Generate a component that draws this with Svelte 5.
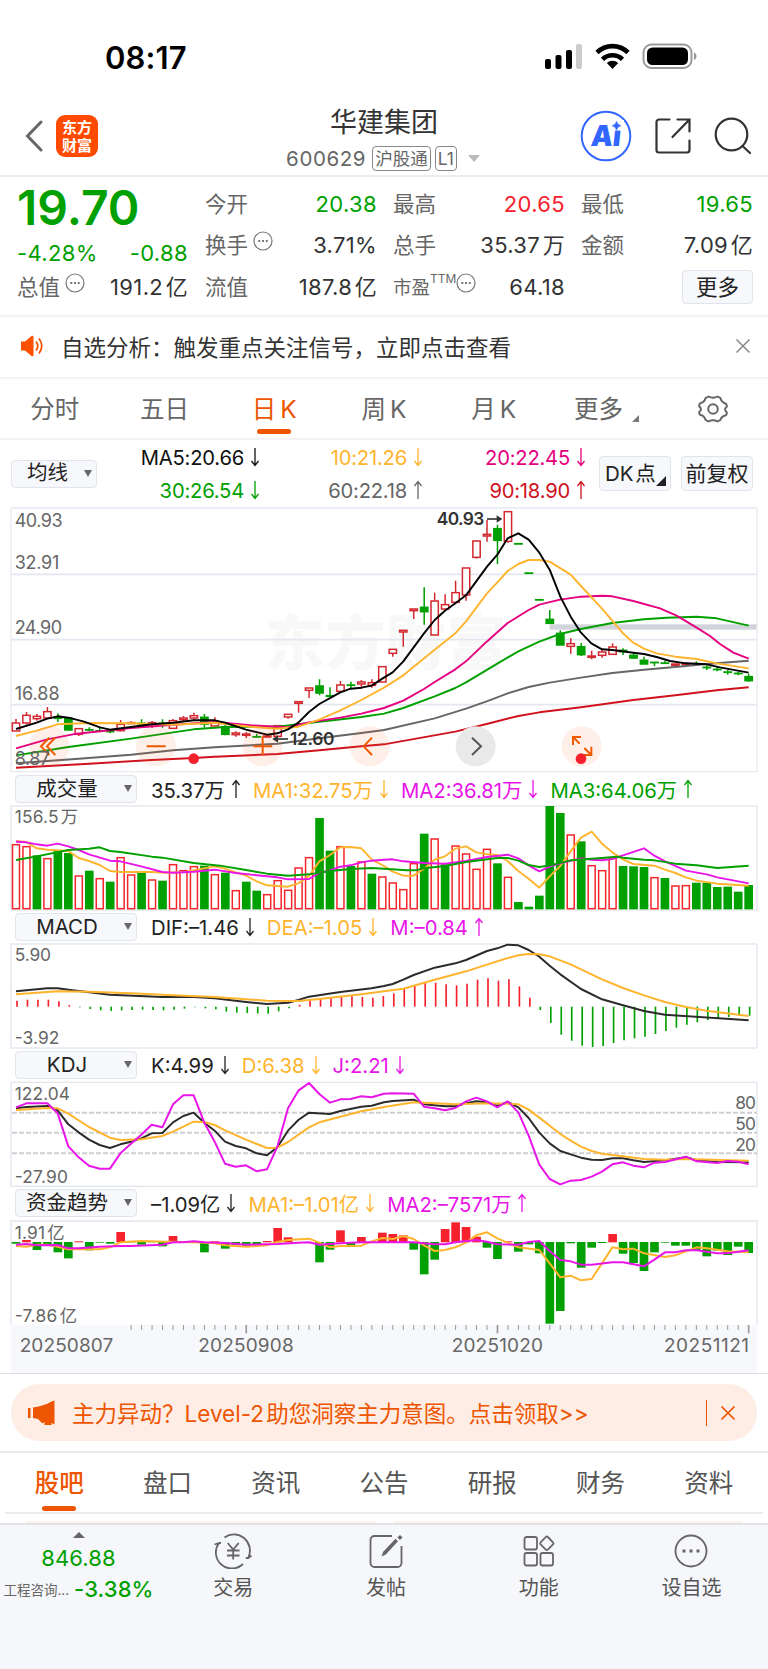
<script>
    // All chart coordinates are in thirds of a pixel
    const barX = (i) => 48 + 31.4 * i;

    // kind, high, top, bottom, low
    const candles = `r657,668,694,694 r636,645,670,674 r642,648,657,662 r621,634,655,655 g640,652,656,666 g653,653,691,691 r685,685,704,708 g682,688,691,694 g684,691,693,694 g692,693,696,700
        r660,672,693,694 r664,667,672,672 g658,669,673,680 r663,667,673,684 g658,669,672,683 r657,661,686,686 r648,653,660,664 r638,646,655,660 g642,651,673,683 r652,667,679,679
        g675,679,704,706 r694,698,705,710 r696,701,707,714 g702,709,711,712 r704,707,712,714 r676,676,710,710 r642,642,652,656 r604,604,611,638 r563,563,572,594 g538,557,580,586
        g562,586,590,590 r543,554,575,578 g545,554,557,565 r540,545,553,566 r538,547,557,563 r499,499,547,547 r447,447,461,470 r390,390,397,440 r326,326,333,357 g262,321,336,374
        r278,302,406,406 r283,313,328,330 r242,277,308,310 r203,203,286,302 r122,122,173,176 r60,102,109,125 g74,85,122,192 r34,34,125,128 g130,130,133,133 g218,218,221,221
        g298,298,301,301 g330,357,371,371 g391,399,436,436 r415,430,440,461 g429,439,465,468 r452,467,473,478 r450,455,467,473 r430,440,464,465 g445,450,456,465 g460,465,475,477
        g470,480,493,493 g486,486,489,498 g482,488,491,491 r491,491,497,497 r487,490,495,495 g484,490,493,493 g496,501,504,510 g502,507,510,514 g510,515,518,524 g515,519,522,526 g521,529,543,545`
        .split(/\s+/)
        .map((c) => ({ up: c[0] === 'r', p: c.slice(1).split(',').map(Number) }));

    const parseBars = (s) => s.split(/\s+/).map((b) => ({ up: b[0] === 'r', y: Number(b.slice(1)) }));

    const volume = parseBars(
        'r223 r229 g257 r265 g243 g250 r317 g303 r325 g336 r262 r314 g309 r329 g333 r283 r301 r289 g288 r313 g309 r361 g336 g363 r373 r331 r360 r293 r262 g145 g243 r229 g289 r275 g312 r320 r338 r358 r280 g192 r206 g284 r227 r251 r297 r237 g281 r321 g397 g411 g378 g109 g130 r194 g215 r286 r301 r263 g289 g290 g292 r322 g325 r347 r346 g339 g339 g352 g351 g366 g346'
    );
    const macd = parseBars(
        'r693 r690 r690 r690 r695 r706 g713 g718 g722 g724 g722 g721 g720 g721 g722 g720 g717 g713 g716 g719 g726 g729 g730 g731 g732 g725 g716 r705 r693 r685 r686 r681 r680 r682 r684 r679 r671 r657 r647 r640 r639 r644 r647 r642 r630 r626 r633 r629 r650 r684 g721 g760 g795 g813 g828 g832 g829 g820 g812 g806 g801 g793 g784 g774 g765 g758 g751 g746 g742 g738 g738'
    );
    const funds = parseBars(
        'g582 r570 g601 g584 g608 g626 r574 g602 g579 g582 r546 g577 g585 g577 g590 r558 r577 r574 g608 r574 g597 g586 g588 g587 r573 r534 r562 r577 r577 g638 g600 r541 g592 r561 r577 r548 r552 r556 g600 g674 g630 r537 r517 r531 r560 g594 g628 r574 g606 g584 g611 g822 g784 g581 g654 g594 g580 r552 g612 g640 g664 g608 g579 g588 g588 g602 g620 g603 g616 g591 g610'
    );

    const priceLines = [
        ['#d0121e', '48,803 268,791 455,780 581,774 644,770 832,762 958,751 1084,739 1152,733 1366,695 1460,672 1555,648 1618,637 1743,622 1900,600 2026,586 2150,571 2246,562'],
        ['#666', '48,790 236,776 393,764 519,751 644,742 832,731 958,715 1084,699 1152,690 1304,655 1398,626 1460,604 1523,580 1586,561 1649,548 1743,533 1837,519 1932,509 2050,499 2120,492 2246,482'],
        ['#00a000', '48,766 205,741 393,716 581,688 675,681 832,680 958,665 1084,651 1152,641 1210,624 1304,589 1366,564 1398,547 1492,491 1555,454 1618,425 1680,402 1743,387 1837,369 1932,358 2000,353 2090,350 2150,355 2246,377'],
        ['#e5007f', '48,745 142,718 230,701 393,684 519,674 644,666 750,676 860,682 927,667 1021,653 1084,641 1152,624 1210,602 1272,567 1304,546 1366,508 1398,484 1460,425 1523,369 1586,330 1618,314 1680,299 1743,290 1806,287 1837,289 1900,303 1980,325 2030,347 2090,383 2130,408 2160,432 2200,458 2246,476'],
        ['#ffb42e', '48,708 110,692 173,673 267,669 393,670 519,674 644,668 750,680 830,686 895,680 958,659 1021,631 1084,600 1152,563 1210,526 1304,449 1366,400 1398,364 1461,280 1492,247 1523,213 1555,192 1586,180 1618,180 1649,185 1712,224 1743,258 1806,326 1869,400 1900,428 1932,446 1970,460 2026,470 2090,477 2150,490 2246,505'],
        ['#000', '48,687 110,668 142,656 173,649 205,653 252,665 300,682 330,689 393,681 455,673 519,668 581,661 644,661 675,668 738,689 801,704 832,700 864,688 895,668 927,636 958,612 1021,577 1052,566 1084,563 1115,557 1147,536 1178,517 1210,484 1272,400 1304,360 1335,332 1366,310 1398,286 1461,200 1492,164 1523,115 1555,100 1586,119 1618,158 1649,209 1681,290 1712,350 1743,398 1774,430 1806,448 1837,450 1900,458 1932,462 1970,471 2010,483 2058,490 2120,493 2160,502 2246,518']
    ];
    const volumeLines = [
        ['#ffb42e', '48,214 79,217 110,236 142,240 205,244 236,265 267,274 299,286 330,304 361,307 455,307 500,309 560,306 644,290 675,297 707,308 738,318 770,335 801,347 864,351 895,341 927,319 958,275 990,256 1021,233 1052,232 1084,236 1115,269 1152,289 1178,306 1210,318 1241,318 1272,297 1304,270 1335,260 1366,237 1398,230 1429,248 1461,254 1492,256 1523,274 1555,304 1586,327 1618,354 1649,320 1680,290 1712,245 1743,204 1775,186 1806,222 1837,248 1869,269 1900,283 1963,288 1995,300 2026,310 2058,323 2090,333 2152,342 2246,348'],
        ['#e815e8', '48,216 79,218 110,224 142,228 173,222 205,230 236,241 267,254 330,273 361,275 424,290 487,307 519,309 581,306 644,300 707,310 832,323 864,329 927,328 958,310 990,302 1021,291 1052,287 1084,278 1115,273 1152,270 1178,269 1210,275 1272,280 1335,282 1398,274 1461,262 1523,255 1555,266 1586,287 1618,305 1649,291 1680,281 1743,266 1775,270 1806,272 1837,268 1869,257 1932,236 1963,258 1995,275 2058,303 2120,314 2152,323 2246,341'],
        ['#00a000', '48,271 110,260 205,241 267,237 299,233 330,244 361,247 455,261 487,264 581,280 660,288 738,301 801,312 864,318 927,314 990,304 1052,298 1115,295 1152,297 1220,302 1245,302 1272,296 1335,289 1398,277 1492,265 1523,265 1555,273 1586,286 1618,292 1649,287 1712,272 1806,265 1849,261 1869,264 1932,270 1963,272 2026,282 2090,287 2152,295 2246,288']
    ];
    const macdLines = [
        ['#2b2b2b', '48,665 142,656 173,656 205,660 330,675 487,682 581,682 644,686 738,697 801,703 864,699 895,691 927,681 1021,667 1115,656 1152,649 1178,643 1210,630 1241,616 1304,594 1366,581 1398,571 1461,544 1492,536 1523,525 1555,527 1586,541 1618,561 1649,588 1681,614 1743,658 1806,689 1869,707 1932,724 1995,735 2246,752'],
        ['#ffb42e', '48,674 173,665 267,666 393,671 519,677 644,682 801,693 895,694 958,688 1084,674 1152,665 1210,657 1304,630 1398,605 1461,585 1523,565 1555,557 1586,553 1618,554 1649,560 1712,584 1806,629 1869,655 1932,677 1995,697 2058,712 2120,723 2246,739']
    ];
    const kdjLines = [
        ['#2b2b2b', '48,175 79,171 142,168 173,181 205,223 236,247 267,269 299,285 330,294 361,283 393,275 424,265 455,250 487,249 519,217 550,198 581,188 613,218 644,242 675,275 707,288 738,295 770,310 801,316 832,292 864,242 895,210 927,188 990,192 1021,183 1084,170 1115,167 1152,157 1178,153 1241,149 1272,163 1335,169 1366,169 1398,160 1429,154 1461,157 1492,167 1523,156 1555,172 1586,204 1618,248 1649,280 1681,303 1712,313 1743,323 1775,329 1806,330 1837,325 1869,325 1900,331 1932,336 1995,331 2058,322 2090,331 2152,336 2246,337'],
        ['#ffb42e', '48,180 142,174 173,175 205,191 267,231 330,263 361,270 424,268 487,258 519,245 581,215 613,216 644,225 675,241 738,269 801,294 832,293 864,276 927,232 958,217 1021,200 1084,184 1152,171 1241,157 1366,163 1461,160 1523,161 1555,163 1586,179 1618,203 1681,252 1712,272 1743,290 1775,303 1806,311 1869,319 1932,327 1995,329 2058,327 2246,332'],
        ['#e815e8', '48,172 79,160 142,160 173,190 205,289 236,322 267,347 299,356 330,356 361,310 393,281 424,254 455,224 487,232 519,163 550,136 581,136 613,218 644,275 675,341 707,350 738,346 770,364 801,358 832,290 864,175 895,122 927,99 958,132 990,158 1021,148 1052,147 1084,139 1115,142 1152,131 1178,130 1241,131 1272,170 1304,175 1335,181 1366,174 1398,154 1429,143 1461,154 1492,172 1523,154 1555,187 1586,257 1618,344 1649,387 1681,403 1712,392 1743,390 1775,380 1806,365 1837,343 1869,337 1900,347 1932,352 1963,338 1995,336 2058,320 2090,334 2152,339 2183,333 2215,335 2246,343']
    ];
    const fundLines = [
        ['#ffb42e', '48,588 79,590 110,584 142,584 173,590 205,598 299,598 330,592 361,577 424,573 500,575 550,576 613,578 644,580 675,586 738,590 801,586 832,576 864,570 927,566 958,578 990,592 1021,588 1084,587 1115,574 1147,564 1178,567 1210,558 1241,567 1272,586 1304,603 1335,600 1366,592 1398,578 1429,556 1461,547 1492,565 1555,592 1618,600 1649,640 1681,682 1712,677 1743,691 1775,687 1806,640 1837,592 1869,598 1900,596 1932,610 1995,621 2026,616 2058,604 2090,592 2120,595 2183,604 2246,607'],
        ['#e815e8', '48,584 79,582 110,586 173,585 205,595 236,595 299,590 361,588 393,588 487,584 519,577 550,577 581,574 613,577 675,579 738,584 832,582 895,578 927,577 958,584 1021,580 1084,577 1152,577 1241,577 1304,583 1335,583 1366,577 1429,570 1461,575 1492,583 1555,584 1586,576 1618,573 1649,603 1681,630 1712,634 1743,644 1775,644 1837,637 1869,637 1932,649 1963,629 1995,607 2026,607 2058,601 2090,601 2152,610 2183,610 2246,601']
    ];

    const ticks = Array.from({ length: 60 }, (_, k) => k + 11);
    const periods = ['分时', '五日', '日 K', '周 K', '月 K', '更多'];
    const averages = [
        ['MA5:20.66', 'down', '#111'], ['10:21.26', 'down', '#ffb42e'], ['20:22.45', 'down', '#e5007f'],
        ['30:26.54', 'down', '#00a000'], ['60:22.18', 'up', '#666'], ['90:18.90', 'up', '#d0121e']
    ];
    const volumeInfo = [['35.37万', 'up', '#222'], ['MA1:32.75万', 'down', '#ffb42e'], ['MA2:36.81万', 'down', '#e815e8'], ['MA3:64.06万', 'up', '#00a000']];
    const macdInfo = [['DIF:–1.46', 'down', '#222'], ['DEA:–1.05', 'down', '#ffb42e'], ['M:–0.84', 'up', '#e815e8']];
    const kdjInfo = [['K:4.99', 'down', '#222'], ['D:6.38', 'down', '#ffb42e'], ['J:2.21', 'down', '#e815e8']];
    const fundInfo = [['–1.09亿', 'down', '#222'], ['MA1:–1.01亿', 'down', '#ffb42e'], ['MA2:–7571万', 'up', '#e815e8']];
    const sections = ['股吧', '盘口', '资讯', '公告', '研报', '财务', '资料'];
</script>

{#snippet arrow(dir)}
    <svg class="arrow" width="10" height="20" viewBox="0 0 10 20" fill="none" stroke="currentColor" stroke-width="1.3">
        {#if dir === 'up'}
            <path d="M5 19V1.5M1.500 6L5 1.500 8.500 6" />
        {:else}
            <path d="M5 1v17.500M1.500 14L5 18.500 8.500 14" />
        {/if}
    </svg>
{/snippet}

{#snippet dots()}
    <svg class="dots" width="20" height="20" viewBox="0 0 20 20" fill="none" stroke="#777">
        <circle cx="10" cy="10" r="9" stroke-width="1.2" />
        <path d="M5.3 10h2M9 10h2M12.7 10h2" stroke-width="1.8" />
    </svg>
{/snippet}

{#snippet indicator(name, info)}
    <div class="indicator">
        <div class="picker wide"><span>{name}</span><i></i></div>
        {#each info as [text, dir, color]}
            <span class="reading" style:color>{text}{@render arrow(dir)}</span>
        {/each}
    </div>
{/snippet}

{#snippet lines(list, width)}
    {#each list as [color, points]}
        <polyline {points} fill="none" stroke={color} stroke-width={width} stroke-linejoin="round" />
    {/each}
{/snippet}

<div class="page">
    <div class="status">
        <span class="time">08:17</span>
        <svg width="154" height="28" viewBox="0 0 154 28">
            <rect x="1" y="16" width="6" height="10" rx="2" />
            <rect x="11.500" y="12" width="6" height="14" rx="2" />
            <rect x="22" y="7" width="6" height="19" rx="2" />
            <rect x="32" y="1" width="6" height="25" rx="2" fill="#ccc" />
            <g fill="none" stroke="#000" stroke-width="4.600">
                <path d="M53 9.500a22 22 0 0 1 31 0" />
                <path d="M58.500 16.300a14.500 14.500 0 0 1 20 0" />
            </g>
            <path d="M62.800 19.900a8.500 8.500 0 0 1 11.400 0L68.500 26z" />
            <rect x="99.500" y="1.500" width="48" height="23.500" rx="8" fill="none" stroke="#999" stroke-width="2" />
            <rect x="103" y="4.500" width="41" height="17.500" rx="5.500" />
            <path d="M150 9.500c3.300 1 3.300 6.500 0 7.500z" fill="#999" />
        </svg>
    </div>

    <header>
        <div class="left">
            <svg width="20" height="34" viewBox="0 0 20 34" fill="none" stroke="#666" stroke-width="3" stroke-linecap="round"><path d="M17 3L3.500 17 17 31" /></svg>
            <div class="logo"><span>东方</span><span>财富</span></div>
        </div>
        <div class="title">
            <h1>华建集团</h1>
            <div class="code">600629<b>沪股通</b><b>L1</b><i></i></div>
        </div>
        <div class="tools">
            <svg width="52" height="52" viewBox="0 0 52 52">
                <circle cx="26" cy="26" r="24.300" fill="none" stroke="#3366ff" stroke-width="2" />
                <text x="14" y="36" class="ai" textLength="30" lengthAdjust="spacingAndGlyphs" transform="skewX(-6)">Ai</text>
                <rect x="31" y="10" width="13" height="10.500" fill="#fff" />
                <path d="M36.500 11.300q.8 3.700 4.500 4.500-3.700.8-4.500 4.500-.8-3.700-4.500-4.500 3.700-.8 4.500-4.500z" fill="#3366ff" stroke="#3366ff" stroke-width=".6" />
            </svg>
            <svg width="38" height="38" viewBox="0 0 38 38" fill="none" stroke="#333" stroke-width="2.200" stroke-linecap="round">
                <path d="M15.500 2.500H5A2.500 2.500 0 0 0 2.500 5v28A2.500 2.500 0 0 0 5 35.500h28a2.500 2.500 0 0 0 2.500-2.500V23.500M23.500 2.500h12V14.500M35 3L18.500 20" />
            </svg>
            <svg width="40" height="40" viewBox="0 0 40 40" fill="none" stroke="#333" stroke-width="2.200" stroke-linecap="round">
                <circle cx="18.500" cy="18.500" r="15.800" /><path d="M29.500 30l7.500 7" />
            </svg>
        </div>
    </header>

    <section class="quote">
        <div class="price">
            <strong>19.70</strong>
            <div class="pair down"><span>-4.28%</span><span>-0.88</span></div>
            <div class="pair"><label>总值{@render dots()}</label><span>191.2 亿</span></div>
        </div>
        <div class="stats">
            <div class="pair"><label>今开</label><span class="down">20.38</span></div>
            <div class="pair"><label>最高</label><span class="up">20.65</span></div>
            <div class="pair"><label>最低</label><span class="down">19.65</span></div>
            <div class="pair"><label>换手{@render dots()}</label><span>3.71%</span></div>
            <div class="pair"><label>总手</label><span>35.37 万</span></div>
            <div class="pair"><label>金额</label><span>7.09 亿</span></div>
            <div class="pair"><label>流值</label><span>187.8 亿</span></div>
            <div class="pair"><label class="pe">市盈<sup>TTM</sup>{@render dots()}</label><span>64.18</span></div>
            <div class="pair end"><button class="more">更多</button></div>
        </div>
    </section>

    <section class="notice">
        <svg width="24" height="22" viewBox="0 0 24 22">
            <path d="M1 6.500h4L11.500 1q2-1 2 1v18q0 2-2 1L5 15.500H1z" fill="#ff5000" />
            <path d="M16 6.500q3.500 4.500 0 9M19 3.500q5.500 7.500 0 15" fill="none" stroke="#ff5000" stroke-width="1.700" />
        </svg>
        <p>自选分析：触发重点关注信号，立即点击查看</p>
        <svg width="16" height="16" viewBox="0 0 16 16" stroke="#888" stroke-width="1.500"><path d="M1.500 1.500l13 13M14.500 1.500l-13 13" /></svg>
    </section>

    <nav class="periods">
        {#each periods as period, i}
            <span class:active={i === 2} class:corner={i === 5}>{period}</span>
        {/each}
        <span>
            <svg width="30" height="28" viewBox="0 0 30 28" fill="none" stroke="#666" stroke-width="2" stroke-linejoin="round">
                <path d="M10.500 1.500q4.500 2.500 9 0l3 1.700q1 4 5.500 5.500 1 1.500.8 3-3.500 2.800 0 5.600.2 1.500-.8 3-4.500 1-5.500 4.500l-3 1.700q-4.500-2.500-9 0l-3-1.700q-1-4-5.500-5-1-1.500-.8-2.800 3.500-2.800 0-5.600-.2-1.500.8-3 4.500-1.200 5.500-5.200z" />
                <circle cx="15" cy="14" r="4.800" />
            </svg>
        </span>
    </nav>

    <section class="averages">
        <div class="picker"><span>均线</span><i></i></div>
        <div class="values">
            {#each averages as [text, dir, color]}
                <span style:color>{text}{@render arrow(dir)}</span>
            {/each}
        </div>
        <button class="corner">DK 点</button>
        <button>前复权</button>
    </section>

    <svg class="chart" height="266" viewBox="0 21 2304 798">
        <text x="794" y="494" class="watermark" textLength="726">东方财富</text>
        <rect x="1649" y="373" width="622" height="16" fill="#d2d4dc" />
        <path d="M33 24H2271M33 223H2271M33 419H2271M33 614H2271" stroke="#e4e7f0" stroke-width="5" />
        <path d="M33 24V815H2271V24" fill="none" stroke="#eaebf0" stroke-width="4" />
        {#each candles as { up, p: [high, top, bottom, low] }, i}
            {@const x = barX(i)}
            <g stroke={up ? '#d3282f' : '#00a000'} stroke-width="4.500" fill={up ? '#fff' : '#00a000'}>
                <path d="M{x} {high}V{top}M{x} {bottom}V{low}" />
                <rect x={x - 11} y={top + 1} width="22" height={Math.max(bottom - top - 2, 1)} />
            </g>
        {/each}
        {@render lines(priceLines, 5.800)}
        <g fill="#f9642a" fill-opacity="0.1">
            {#each [148, 468, 788, 1109, 1745] as cx}<circle {cx} cy="739" r="60" />{/each}
        </g>
        <circle cx="1427" cy="739" r="60" fill="#e9e9e9" />
        <g fill="none" stroke="#f05a00" stroke-width="6">
            <path d="M148 713l-25 26 25 26M166 713l-25 26 25 26M440 739h57M760 739h57M788 709v56M1116 713l-25 26 25 26" />
            <path d="M1719 735V711h24M1719 711l20 20M1750 765h24v-25M1774 765l-21-21" />
            <path d="M1416 713l27 26-27 26" stroke="#555" />
        </g>
        <circle cx="581" cy="776" r="16" fill="#f5222d" />
        <circle cx="1743" cy="776" r="16" fill="#f5222d" />
        <g class="scale">
            <text x="44" y="82" textLength="144">40.93</text>
            <text x="44" y="206" textLength="134">32.91</text>
            <text x="44" y="402" textLength="142">24.90</text>
            <text x="44" y="599" textLength="135">16.88</text>
            <text x="44" y="795" textLength="106">8.87</text>
        </g>
        <g class="peak">
            <text x="1310" y="75" textLength="143">40.93</text>
            <text x="870" y="735" textLength="133">12.60</text>
            <path d="M1461 57h35M828 717h36" stroke="#222" stroke-width="5" />
            <path d="M1490 46l17 11-17 11zM834 706l-17 11 17 11z" />
        </g>
    </svg>

    {@render indicator('成交量', volumeInfo)}
    <svg class="chart" height="106" viewBox="0 106 2304 318">
        <rect x="33" y="109" width="2238" height="312" class="frame" />
        {#each volume as { up, y }, i}
            {#if up}
                <rect x={barX(i) - 10.500} y={y + 2} width="21" height={415 - y} fill="#fff" stroke="#f5262a" stroke-width="4.500" />
            {:else}
                <rect x={barX(i) - 13} {y} width="26" height={419 - y} fill="#00a000" />
            {/if}
        {/each}
        {@render lines(volumeLines, 5.800)}
        <text x="44" y="161" class="small" textLength="190">156.5 万</text>
    </svg>

    {@render indicator('MACD', macdInfo)}
    <svg class="chart" height="106" viewBox="0 520 2304 318">
        <rect x="33" y="523" width="2238" height="312" class="frame" />
        {#each macd as { up, y }, i}
            <path d="M{barX(i) + 3} 711V{y}" stroke={up ? '#f5222d' : '#00a000'} stroke-width="5" />
        {/each}
        {@render lines(macdLines, 6)}
        <g class="small">
            <text x="44" y="575" textLength="109">5.90</text>
            <text x="44" y="824" textLength="134">-3.92</text>
        </g>
    </svg>

    {@render indicator('KDJ', kdjInfo)}
    <svg class="chart" height="106" viewBox="0 93 2304 318">
        <rect x="33" y="97" width="2238" height="312" class="frame" />
        <path d="M36 188H2271M36 248H2271M36 310H2271" stroke="#d0d0d4" stroke-width="6" stroke-dasharray="15 6" />
        {@render lines(kdjLines, 6)}
        <g class="small">
            <text x="44" y="151" textLength="166">122.04</text>
            <text x="44" y="399" textLength="160">-27.90</text>
            <text x="2206" y="177" textLength="62">80</text>
            <text x="2206" y="239" textLength="62">50</text>
            <text x="2206" y="303" textLength="62">20</text>
        </g>
    </svg>

    {@render indicator('资金趋势', fundInfo)}
    <svg class="chart" height="154" viewBox="0 507 2304 462">
        <path d="M33 824V513H2271V824" class="frame" />
        {#each funds as { up, y }, i}
            <rect x={barX(i) - 13} y={Math.min(y, 576)} width="26" height={Math.max(Math.abs(577 - y), 1)} fill={up ? '#f5222d' : '#00a000'} />
        {/each}
        {@render lines(fundLines, 6)}
        <rect x="33" y="824" width="2238" height="145" fill="#f7f8fb" />
        {#each ticks as i}
            <path d="M{barX(i)} 825V{i % 24 === 22 ? 850 : 840}" stroke="#999" stroke-width={i % 24 === 22 ? 5 : 3} />
        {/each}
        <g class="small">
            <text x="44" y="566" textLength="150">1.91 亿</text>
            <text x="44" y="815" textLength="187">-7.86 亿</text>
        </g>
        <g class="dates">
            <text x="59" y="907" textLength="281">20250807</text>
            <text x="595" y="907" textLength="286">20250908</text>
            <text x="1355" y="907" textLength="274">20251020</text>
            <text x="1992" y="907" textLength="255">20251121</text>
        </g>
    </svg>

    <section class="promo">
        <div class="banner">
            <svg width="28" height="26" viewBox="0 0 28 26" fill="#ee5500">
                <path d="M0 8h2.500v10H0zM5 7.500Q17 5.500 23.500 1.500L26.500.500v24l-3-1.500v2h-7v-3l-2 1.500L10 19l-5-1z" />
            </svg>
            <p>主力异动？Level-2 助您洞察主力意图。点击领取&gt;&gt;</p>
            <svg class="close" width="16" height="16" viewBox="0 0 16 16" stroke="#ee5500" stroke-width="1.700"><path d="M1.500 1.500l13 13M14.500 1.500l-13 13" /></svg>
        </div>
    </section>

    <nav class="sections">
        {#each sections as section, i}
            <span class:active={i === 0}>{section}</span>
        {/each}
    </nav>
    <div class="peek"><i></i><i></i></div>

    <footer>
        <div class="index">
            <i></i>
            <b>846.88</b>
            <div><small>工程咨询...</small><b>-3.38%</b></div>
        </div>
        <div class="item">
            <svg width="38" height="36" viewBox="0 0 38 36" fill="none" stroke="#666" stroke-width="1.800">
                <path d="M10.500 4.500A16 16 0 0 1 34.500 24M31.800 25l2.500 0 3.200-2.500M29 31A16 16 0 0 1 5 10M.500 11.500L5.500 10l1.500 0" />
                <path d="M13.700 10l5.500 6.500 5.500-6.500M19.200 16.500v10M13 17.500h12.500M13 22.500h12.500" />
            </svg>
            交易
        </div>
        <div class="item">
            <svg width="36" height="36" viewBox="0 0 36 36" fill="none" stroke="#666" stroke-width="1.800">
                <path d="M24 3H6.500A4 4 0 0 0 2.500 7v23a4 4 0 0 0 4 4h23a4 4 0 0 0 4-4V13" />
                <path d="M13.500 23.500l1.500-4.500L27.500 5.800l2.500 2.500L17.800 21.500z" fill="#666" stroke="none" /><path d="M30.500 4.500l1.500 1.500 1.500-1.500-1.500-1.500z" fill="#666" stroke-width="1.500" />
            </svg>
            发帖
        </div>
        <div class="item">
            <svg width="34" height="36" viewBox="0 0 34 36" fill="none" stroke="#666" stroke-width="1.800">
                <rect x="2.500" y="4" width="12.500" height="12.500" rx="2" /><rect x="2.500" y="20" width="12.500" height="12.500" rx="2" /><rect x="18.500" y="20" width="12.500" height="12.500" rx="2" />
                <path d="M23.800 4q1-1 2 0l5.200 5.400q1 1 0 2l-5.200 5.200q-1 1-2 0L18.600 11.400q-1-1 0-2z" />
            </svg>
            功能
        </div>
        <div class="item">
            <svg width="36" height="36" viewBox="0 0 36 36" fill="none" stroke="#666" stroke-width="1.800">
                <circle cx="18" cy="18" r="15.500" />
                <path d="M9.500 18h3M16.500 18h3M23.500 18h3" stroke-width="3" />
            </svg>
            设自选
        </div>
    </footer>
</div>

<style>
    :global(body) {
        margin: 0;
        background: #fff;
    }

    .page {
        width: 768px;
        height: 1669px;
        overflow: hidden;
        display: flex;
        flex-direction: column;
        font-family: Inter, 'Noto Sans CJK SC', sans-serif;
        color: #333;
    }

    .page > * {
        flex: none;
        box-sizing: border-box;
    }

    svg {
        display: block;
        flex: none;
    }

    p, h1 {
        margin: 0;
        font-weight: 400;
    }

    button {
        font: inherit;
        color: #222;
        padding: 0;
        border: 1px solid #e2e4ec;
        border-radius: 4px;
        background: #f7f8fb;
    }

    .status {
        height: 97px;
        display: flex;
        justify-content: space-between;
        padding: 43px 70px 0 105px;
    }

    .time {
        font-size: 31px;
        line-height: 30px;
        font-weight: 600;
        letter-spacing: 0.1px;
        color: #000;
    }

    header {
        height: 80px;
        display: grid;
        grid-template-columns: 1fr 200px 1fr;
        border-bottom: 2px solid #ececee;
    }

    .left {
        display: flex;
        align-items: center;
        gap: 12px;
        padding-left: 24px;
    }

    .logo {
        display: flex;
        flex-direction: column;
        width: 42px;
        height: 42px;
        border-radius: 9px;
        background: #ff4a00;
        color: #fff;
        font-family: 'Noto Sans CJK SC', sans-serif;
        font-size: 15px;
        line-height: 17.500px;
        font-weight: 700;
        text-align: center;
        padding-top: 3px;
        box-sizing: border-box;
    }

    .title {
        display: flex;
        flex-direction: column;
        align-items: center;
    }

    h1 {
        font-size: 27px;
        line-height: 30px;
        margin-top: 11px;
    }

    .code {
        display: flex;
        align-items: center;
        height: 25px;
        margin: 8px 2px 0 0;
        font-size: 20.500px;
        letter-spacing: 0.6px;
        color: #666;
    }

    .code b {
        font-weight: 400;
        font-size: 17.500px;
        line-height: 23px;
        letter-spacing: 0;
        border: 1px solid #888;
        border-radius: 4px;
        padding: 0 2px;
        margin-left: 4px;
    }

    .code b:first-of-type {
        margin-left: 6px;
    }

    .code i {
        border: 6px solid transparent;
        border-top: 7px solid #bbb;
        border-bottom: 0;
        margin-left: 11px;
    }

    .tools {
        display: flex;
        align-items: center;
        justify-content: flex-end;
        gap: 21.500px;
        padding-right: 15px;
    }

    .ai {
        font-size: 29px;
        font-weight: 900;
        fill: #3366ff;
    }

    .quote {
        display: flex;
        gap: 17px;
        height: 140px;
        padding: 0 15px 0 17px;
        border-bottom: 2px solid #f4f4f6;
    }

    .price {
        width: 171px;
    }

    .price strong {
        display: block;
        font-size: 48px;
        line-height: 56px;
        height: 56px;
        padding-top: 3px;
        font-weight: 600;
        letter-spacing: 0;
        color: #00a000;
    }

    .price .pair {
        height: 34px;
    }

    .stats {
        flex: 1;
        display: grid;
        grid-template-columns: repeat(3, 172px);
        grid-template-rows: repeat(3, 41.500px);
        justify-content: space-between;
        padding-top: 6px;
    }

    .pair {
        display: flex;
        align-items: center;
        justify-content: space-between;
        font-size: 21.500px;
        line-height: 30px;
        white-space: nowrap;
    }

    .pair span {
        font-size: 22px;
        letter-spacing: 0.35px;
        word-spacing: -4px;
    }

    .pair.end {
        justify-content: flex-end;
    }

    .pair label {
        display: flex;
        align-items: center;
        color: #666;
    }

    .dots {
        margin: -8px 0 0 5px;
    }

    .pair .pe {
        font-size: 18.500px;
    }

    sup {
        font-size: 12px;
        line-height: 12px;
        margin-top: -16px;
    }

    .pe .dots {
        margin-left: 0;
    }

    .down {
        color: #00a000;
    }

    .up {
        color: #f5222d;
    }

    .more {
        width: 71px;
        height: 34px;
        line-height: 32px;
    }

    .notice {
        height: 62px;
        display: flex;
        align-items: center;
        padding: 0 17px 2px 20px;
        font-size: 22.500px;
        border-bottom: 2px solid #f4f4f6;
    }

    .notice p {
        flex: 1;
        padding-left: 17px;
    }

    .periods {
        height: 61px;
        display: grid;
        grid-template-columns: repeat(7, 1fr);
        font-size: 24.500px;
        line-height: 58px;
        text-align: center;
        color: #666;
        border-bottom: 2px solid #f4f4f6;
    }

    .periods span {
        display: flex;
        justify-content: center;
        align-items: center;
        position: relative;
        white-space: pre;
        word-spacing: -3px;
    }

    .periods .corner {
        padding-right: 10px;
    }

    .active {
        color: #ee5500;
    }

    .active::after {
        content: '';
        position: absolute;
        left: calc(50% - 17px);
        bottom: 4px;
        width: 34px;
        height: 5px;
        border-radius: 3px;
        background: #ee5500;
    }

    .corner {
        position: relative;
    }

    .corner::after {
        content: '';
        position: absolute;
        right: 4px;
        bottom: 4px;
        border-left: 10px solid transparent;
        border-bottom: 10px solid #222;
    }

    .periods .corner::after {
        right: 19px;
        bottom: 16px;
        border-left-width: 7px;
        border-bottom: 7px solid #777;
    }

    .averages {
        height: 67px;
        display: flex;
        align-items: center;
        padding: 0 15px 0 11px;
        font-size: 21px;
    }

    .picker {
        display: flex;
        align-items: center;
        justify-content: space-between;
        box-sizing: border-box;
        width: 87px;
        height: 28px;
        padding: 0 4px 1px 15px;
        font-size: 20.500px;
        line-height: 26px;
        color: #222;
        border: 1px solid #e2e4ec;
        border-radius: 4px;
        background: #f7f8fb;
    }

    .picker i {
        border: 4.500px solid transparent;
        border-top: 7px solid #666;
        border-bottom: 0;
    }

    .picker.wide {
        width: 122px;
        margin-right: 14px;
        padding-left: 0;
    }

    .wide span {
        flex: 1;
        text-align: center;
        padding-right: 6px;
    }

    .values {
        flex: 1;
        display: grid;
        grid-template-columns: repeat(3, 163px);
        grid-auto-rows: 33px;
        justify-content: end;
        margin-right: 13px;
        font-size: 20.200px;
        letter-spacing: -0.2px;
    }

    .values span {
        display: flex;
        align-items: center;
        justify-content: flex-end;
    }

    .arrow {
        margin-left: 6px;
    }

    .averages button {
        width: 73px;
        height: 35px;
        line-height: 33px;
    }

    .averages button + button {
        margin-left: 10px;
    }

    .averages button.corner {
        text-align: left;
        padding-left: 5px;
        font-size: 20.500px;
        word-spacing: -4px;
        white-space: nowrap;
    }

    .indicator {
        display: flex;
        align-items: center;
        height: 32px;
        padding-left: 15px;
    }

    .reading {
        display: flex;
        align-items: center;
        margin-right: 12px;
        font-size: 20.300px;
        white-space: nowrap;
    }

    .chart {
        width: 768px;
    }

    .frame {
        fill: none;
        stroke: #e4e6ee;
        stroke-width: 4;
    }

    .watermark {
        font: 900 180px 'Noto Sans CJK SC', sans-serif;
        fill: #f8f8f9;
    }

    .scale, .small {
        font-size: 54px;
        fill: #666;
    }

    .small {
        font-size: 52px;
        word-spacing: -9px;
    }

    .peak {
        font-size: 52px;
        font-weight: 600;
        fill: #333;
    }

    .dates {
        font-size: 57px;
        fill: #666;
    }

    .promo {
        border-top: 1px solid #dcdde1;
        border-bottom: 2px solid #ececee;
        padding: 10px 11px;
    }

    .banner {
        display: flex;
        align-items: center;
        height: 57px;
        border-radius: 29px;
        background: #feede5;
        color: #ee5500;
        font-size: 22.500px;
        padding: 0 21px 0 17px;
    }

    .banner p {
        flex: 1;
        padding: 0 0 2px 16px;
        word-spacing: -4px;
    }

    .banner .close {
        padding-left: 13px;
        border-left: 1.500px solid #ee5500;
        height: 26px;
    }

    .sections {
        height: 61px;
        margin: 0 5px;
        display: grid;
        grid-template-columns: repeat(7, 1fr);
        font-size: 24.500px;
        line-height: 60px;
        text-align: center;
        color: #555;
        border-bottom: 2px solid #ececee;
    }

    .sections span {
        position: relative;
    }

    .sections .active {
        color: #ee5500;
        font-weight: 500;
    }

    .sections .active::after {
        bottom: 2px;
    }

    .peek {
        display: grid;
        grid-template-columns: 350px 350px;
        gap: 17px;
        align-items: end;
        height: 9px;
        padding-left: 26px;
    }

    .peek i {
        height: 2px;
        border-radius: 4px 4px 0 0;
        background: #fef0ec;
    }

    footer {
        display: flex;
        height: 146px;
        background: #f6f7fa;
        border-top: 2px solid #e2e3e8;
        color: #555;
    }

    .index {
        width: 157px;
        display: flex;
        flex-direction: column;
        align-items: center;
        color: #00a000;
    }

    .index i {
        border: 6.500px solid transparent;
        border-bottom: 6px solid #666;
        border-top: 0;
        margin-top: 7px;
    }

    .index b {
        font-weight: 400;
        font-size: 22px;
        line-height: 30px;
        letter-spacing: 0.1px;
        margin-top: 5px;
    }

    .index div {
        display: flex;
        align-items: center;
        gap: 5px;
        margin-top: -4px;
    }

    .index div b {
        font-weight: 500;
    }

    small {
        font-size: 13.500px;
        color: #666;
        margin-top: 5px;
        white-space: nowrap;
    }

    .item {
        width: 152.700px;
        display: flex;
        flex-direction: column;
        align-items: center;
        font-size: 20px;
        line-height: 30px;
    }

    .item svg {
        margin: 8px 0 4px;
    }
</style>
